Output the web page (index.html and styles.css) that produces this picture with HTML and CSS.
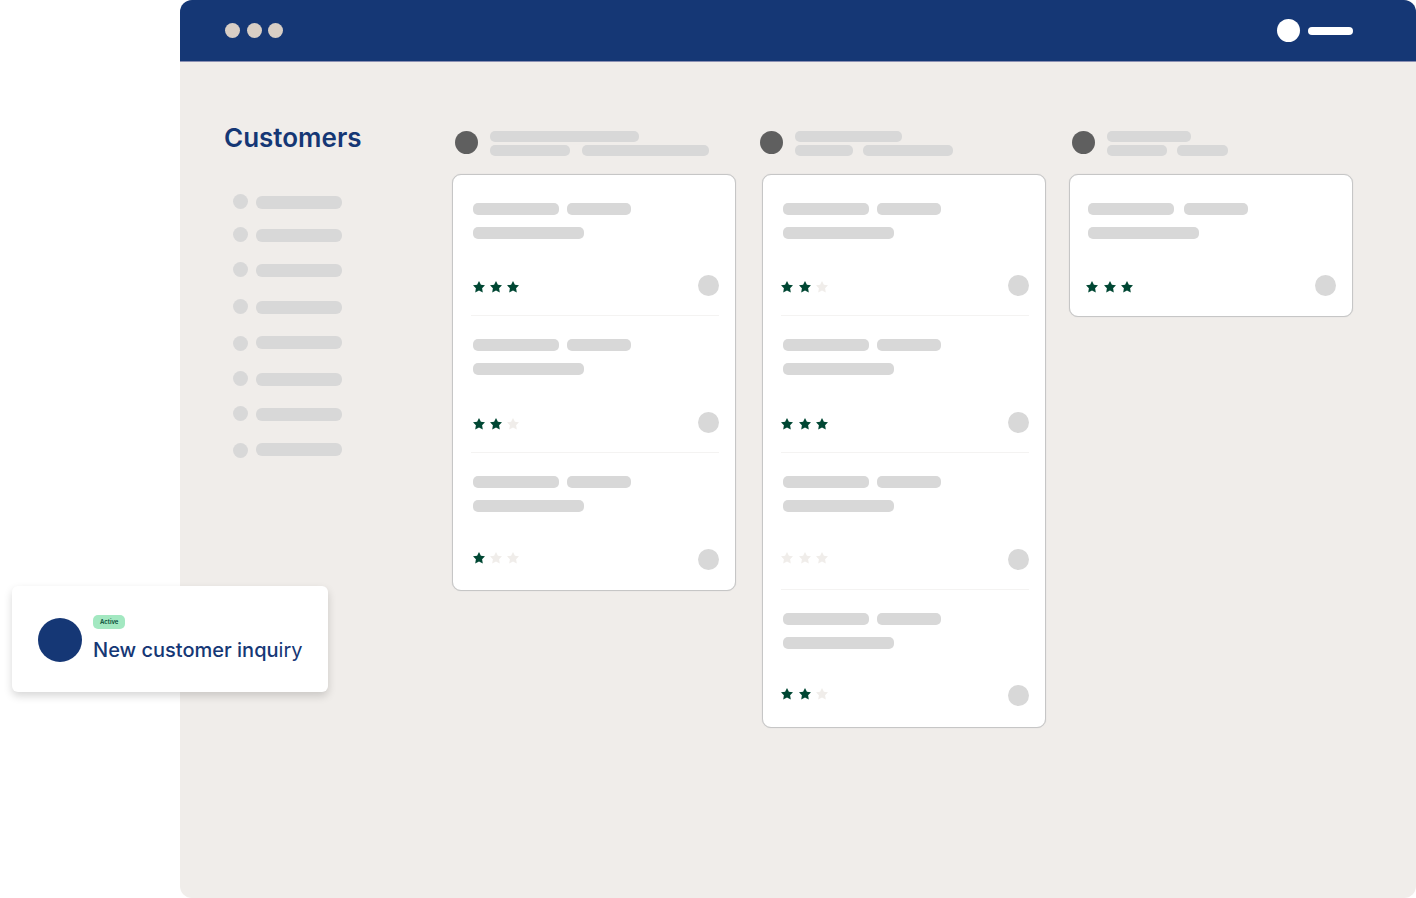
FILE: index.html
```html
<!DOCTYPE html>
<html lang="en">
<head>
<meta charset="utf-8">
<meta name="viewport" content="width=device-width, initial-scale=1">
<title>Customers</title>
<link rel="stylesheet" href="styles.css">
</head>
<body>
<svg class="sprite" aria-hidden="true">
  <symbol id="star" viewBox="0 0 12 12"><path d="M6 0 7.9 3.7 12 4.3 9.1 7.2 9.8 11.4 6 9.5 2.2 11.4 2.9 7.2 0 4.3 4.1 3.7Z"/></symbol>
</svg>
<div class="window">
  <header class="topbar">
    <div class="dots"><span class="dot dot-first"></span><span class="dot"></span><span class="dot"></span></div>
    <div class="account"><span class="account-avatar"></span><span class="account-name"></span></div>
  </header>
  <div class="content">
    <nav class="sidebar">
      <h1 class="title">Customers</h1>
      <ul class="menu">
        <li class="menu-item"><span class="menu-icon"></span><span class="menu-label"></span></li>
        <li class="menu-item near"><span class="menu-icon"></span><span class="menu-label"></span></li>
        <li class="menu-item"><span class="menu-icon"></span><span class="menu-label"></span></li>
        <li class="menu-item far"><span class="menu-icon"></span><span class="menu-label"></span></li>
        <li class="menu-item far"><span class="menu-icon"></span><span class="menu-label raised"></span></li>
        <li class="menu-item"><span class="menu-icon"></span><span class="menu-label"></span></li>
        <li class="menu-item"><span class="menu-icon"></span><span class="menu-label"></span></li>
        <li class="menu-item far"><span class="menu-icon"></span><span class="menu-label raised"></span></li>
      </ul>
    </nav>
    <main class="board">
      <section class="column column-a">
        <div class="column-head">
          <span class="column-avatar"></span>
          <div class="column-lines"><span class="line line-1"></span><span class="line line-2"></span><span class="line line-3"></span></div>
        </div>
        <div class="card">
          <article class="entry">
            <div class="bars"><span class="bar bar-1"></span><span class="bar bar-2"></span><span class="bar bar-3"></span></div>
            <div class="entry-foot tight"><div class="rating"><svg class="star on"><use href="#star"/></svg><svg class="star on"><use href="#star"/></svg><svg class="star on"><use href="#star"/></svg></div><span class="owner"></span></div>
          </article>
          <article class="entry">
            <div class="bars"><span class="bar bar-1"></span><span class="bar bar-2"></span><span class="bar bar-3"></span></div>
            <div class="entry-foot"><div class="rating"><svg class="star on"><use href="#star"/></svg><svg class="star on"><use href="#star"/></svg><svg class="star"><use href="#star"/></svg></div><span class="owner"></span></div>
          </article>
          <article class="entry">
            <div class="bars"><span class="bar bar-1"></span><span class="bar bar-2"></span><span class="bar bar-3"></span></div>
            <div class="entry-foot"><div class="rating high"><svg class="star on"><use href="#star"/></svg><svg class="star"><use href="#star"/></svg><svg class="star"><use href="#star"/></svg></div><span class="owner"></span></div>
          </article>
        </div>
      </section>
      <section class="column column-b">
        <div class="column-head">
          <span class="column-avatar"></span>
          <div class="column-lines"><span class="line line-1"></span><span class="line line-2"></span><span class="line line-3"></span></div>
        </div>
        <div class="card">
          <article class="entry">
            <div class="bars"><span class="bar bar-1"></span><span class="bar bar-2"></span><span class="bar bar-3"></span></div>
            <div class="entry-foot tight"><div class="rating"><svg class="star on"><use href="#star"/></svg><svg class="star on"><use href="#star"/></svg><svg class="star"><use href="#star"/></svg></div><span class="owner"></span></div>
          </article>
          <article class="entry">
            <div class="bars"><span class="bar bar-1"></span><span class="bar bar-2"></span><span class="bar bar-3"></span></div>
            <div class="entry-foot"><div class="rating"><svg class="star on"><use href="#star"/></svg><svg class="star on"><use href="#star"/></svg><svg class="star on"><use href="#star"/></svg></div><span class="owner"></span></div>
          </article>
          <article class="entry">
            <div class="bars"><span class="bar bar-1"></span><span class="bar bar-2"></span><span class="bar bar-3"></span></div>
            <div class="entry-foot"><div class="rating high"><svg class="star"><use href="#star"/></svg><svg class="star"><use href="#star"/></svg><svg class="star"><use href="#star"/></svg></div><span class="owner"></span></div>
          </article>
          <article class="entry">
            <div class="bars"><span class="bar bar-1"></span><span class="bar bar-2"></span><span class="bar bar-3"></span></div>
            <div class="entry-foot tight"><div class="rating high"><svg class="star on"><use href="#star"/></svg><svg class="star on"><use href="#star"/></svg><svg class="star"><use href="#star"/></svg></div><span class="owner"></span></div>
          </article>
        </div>
      </section>
      <section class="column column-c">
        <div class="column-head">
          <span class="column-avatar"></span>
          <div class="column-lines"><span class="line line-1"></span><span class="line line-2"></span><span class="line line-3"></span></div>
        </div>
        <div class="card">
          <article class="entry">
            <div class="bars"><span class="bar bar-1"></span><span class="bar bar-2"></span><span class="bar bar-3"></span></div>
            <div class="entry-foot tight"><div class="rating"><svg class="star on"><use href="#star"/></svg><svg class="star on"><use href="#star"/></svg><svg class="star on"><use href="#star"/></svg></div><span class="owner"></span></div>
          </article>
        </div>
      </section>
    </main>
  </div>
</div>
<aside class="notice">
  <span class="notice-avatar"></span>
  <div class="notice-body">
    <span class="badge">Active</span>
    <p class="notice-text">New customer inqu<span class="thin">iry</span></p>
  </div>
</aside>
</body>
</html>
```
FILE: styles.css
```css
* { box-sizing: border-box; }

body {
  margin: 0;
  background: #fff;
  color: #153775;
  font-family: Inter, "Liberation Sans", sans-serif;
}

.sprite { position: absolute; width: 0; height: 0; }

.window {
  margin-left: 180px;
  min-height: 100vh;
  border-radius: 12px;
  overflow: hidden;
  background: #f0edea;
}

.topbar {
  display: flex;
  align-items: center;
  justify-content: space-between;
  height: 62px;
  padding: 0 63px 1px 45px;
  background: #153775;
  border-bottom: 1px solid #8b90b3;
}

.dots { display: flex; gap: 6px; }
.dot { width: 15px; height: 15px; border-radius: 50%; background: #d8cec5; }
.dot-first { margin-right: 1px; }

.account { display: flex; align-items: center; gap: 8px; }
.account-avatar { width: 23px; height: 23px; border-radius: 50%; background: #fff; }
.account-name { width: 45px; height: 8px; margin-top: 2px; border-radius: 4px; background: #fff; }

.content { display: flex; padding: 60px 63px 60px 44px; }

.sidebar { flex: 0 0 228px; }
.title {
  margin: 0 0 40px;
  font-size: 26px;
  line-height: 32px;
  font-weight: 600;
}
.menu { margin: 0; padding: 0 0 0 9px; list-style: none; }
.menu-item { display: flex; align-items: flex-start; gap: 8px; }
.menu-item + .menu-item { margin-top: 20px; }
.menu-item + .near { margin-top: 18px; }
.menu-item + .far { margin-top: 22px; }
.menu-icon { width: 15px; height: 15px; border-radius: 50%; background: #d8d8d8; }
.menu-label { width: 86px; height: 13px; margin-top: 2px; border-radius: 6px; background: #d8d8d8; }
.menu-label.raised { margin-top: 0; }

.board { flex: 1; display: flex; align-items: flex-start; padding-top: 9px; }
.column { flex: 1 1 0; }
.column-b { margin-left: 26px; }
.column-c { margin-left: 23px; }

.column-head { display: flex; gap: 12px; padding-left: 3px; margin-bottom: 18px; }
.column-b .column-head { margin-left: -2px; padding-left: 0; }
.column-avatar { flex: none; width: 23px; height: 23px; border-radius: 50%; background: #5f5f5f; }
.column-lines {
  display: grid;
  grid-template-columns: auto auto;
  justify-content: start;
  row-gap: 3px;
}
.line { height: 11px; border-radius: 5px; background: #d8d8d8; }
.line-1 { grid-column: 1 / -1; }
.column-a .line-1 { width: 149px; }
.column-a .line-2 { width: 80px; margin-right: 12px; }
.column-a .line-3 { width: 127px; }
.column-b .line-1 { width: 107px; }
.column-b .line-2 { width: 58px; margin-right: 10px; }
.column-b .line-3 { width: 90px; }
.column-c .line-1 { width: 84px; }
.column-c .line-2 { width: 60px; margin-right: 10px; }
.column-c .line-3 { width: 51px; }

.card {
  padding: 5px 16px 0 18px;
  background: #fff;
  border: 1px solid #c6c6c6;
  border-radius: 9px;
  box-shadow: 0 0 1px #c6c6c6;
}
.column-b .card { padding-bottom: 1px; }
.column-c .card { padding-left: 16px; }

.entry { padding: 23px 0 19px; border-bottom: 1px solid #f4f3f2; }
.entry:last-child { padding-bottom: 20px; border-bottom: 0; }

.bars {
  display: grid;
  grid-template-columns: 86px 64px;
  gap: 12px 8px;
  padding-left: 2px;
}
.column-c .bars { column-gap: 10px; }
.bar { height: 12px; border-radius: 5px; background: #d8d8d8; }
.bar-3 { grid-column: 1 / -1; width: 111px; }

.entry-foot { display: flex; justify-content: space-between; margin-top: 37px; }
.entry-foot.tight { margin-top: 36px; }
.rating { display: flex; gap: 5px; padding: 6px 0 0 2px; }
.rating.high { padding-top: 3px; }
.column-b .rating, .column-c .rating { padding-left: 0; }
.column-b .star:first-child, .column-c .star:first-child { margin-right: 1px; }
.star { width: 12px; height: 12px; fill: #f0edea; }
.star.on { fill: #004733; }
.owner { width: 21px; height: 21px; border-radius: 50%; background: #d8d8d8; }

/* Floats over the window's left edge */
.notice {
  position: absolute;
  left: 12px;
  top: 586px;
  display: flex;
  align-items: center;
  gap: 11px;
  padding: 29px 26px;
  background: #fff;
  border-radius: 6px;
  box-shadow: 0 4px 8px rgba(0, 0, 0, 0.16);
}
.notice-avatar { flex: none; width: 44px; height: 44px; border-radius: 50%; background: #153775; margin-top: 2px; }
.notice-body { display: flex; flex-direction: column; align-items: flex-start; gap: 8px; }
.badge {
  padding: 0 7px;
  border-radius: 5px;
  background: #a3e8c1;
  color: #004733;
  font-size: 6px;
  line-height: 14px;
  font-weight: 600;
}
.notice-text { margin: 0; font-size: 20px; line-height: 26px; font-weight: 500; }
.thin { font-weight: 400; }
```
